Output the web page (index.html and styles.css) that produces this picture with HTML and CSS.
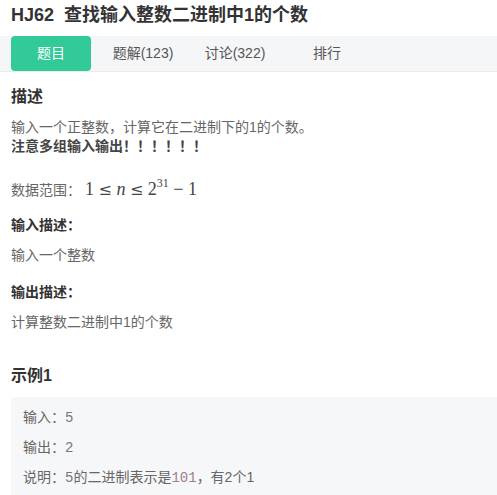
FILE: index.html
```html
<!DOCTYPE html>
<html lang="zh-CN">
<head>
  <meta charset="UTF-8">
  <title>HJ62 查找输入整数二进制中1的个数</title>
  <link rel="stylesheet" href="styles.css">
</head>
<body>
  <h1 class="title">HJ62&nbsp; 查找输入整数二进制中1的个数</h1>

  <div class="tabs">
    <a class="tab active">题目</a>
    <a class="tab">题解(123)</a>
    <a class="tab">讨论(322)</a>
    <a class="tab">排行</a>
  </div>

  <div class="content">
    <h2 class="section-title">描述</h2>
    <p class="text">输入一个正整数，计算它在二进制下的1的个数。</p>
    <p class="text strong">注意多组输入输出！！！！！！</p>
    <p class="text range">数据范围：<span class="math">1 <span class="rel">≤</span> <i>n</i> <span class="rel">≤</span> 2<sup>31</sup> − 1</span></p>

    <h3 class="sub-title first">输入描述：</h3>
    <p class="text">输入一个整数</p>

    <h3 class="sub-title">输出描述：</h3>
    <p class="text">计算整数二进制中1的个数</p>

    <h2 class="section-title example-title">示例1</h2>
    <div class="example">
      <p>输入：<code>5</code></p>
      <p>输出：<code>2</code></p>
      <p>说明：<code>5</code>的二进制表示是<code class="hl">101</code>，有2个1</p>
    </div>
  </div>
</body>
</html>
```

FILE: styles.css
```css
* {
  margin: 0;
  padding: 0;
  box-sizing: border-box;
}
body {
  font-family: 'Liberation Sans', 'Noto Sans CJK SC', sans-serif;
  color: #333;
  background: white;
  overflow: hidden;
}
.title {
  font-size: 18px;
  font-weight: bold;
  color: #333;
  padding: 4px 11px 0;
  height: 36px;
  line-height: 22px;
}
.tabs {
  display: flex;
  background: #f5f6f8;
  border-bottom: 1px solid #eaebee;
  padding-left: 11px;
  height: 36px;
}
.tab {
  width: 80px;
  height: 35px;
  line-height: 35px;
  text-align: center;
  font-size: 14px;
  color: #555;
  margin-right: 12px;
}
.tab.active {
  background: #32ca99;
  color: white;
  border-radius: 4px;
}
.content {
  padding: 0 11px;
}
.section-title {
  font-size: 16px;
  font-weight: bold;
  color: #333;
  margin-top: 14px;
  line-height: 22px;
}
.text {
  font-size: 14px;
  color: #666;
  line-height: 19px;
}
.section-title + .text {
  margin-top: 10px;
}
.strong {
  font-weight: bold;
  color: #444;
}
.range {
  margin-top: 16px;
  line-height: 22px;
}
.math {
  font-family: 'Liberation Serif', 'DejaVu Serif', serif;
  font-size: 18px;
  color: #444;
  margin-left: 4px;
}
.math .rel {
  font-family: 'DejaVu Serif', serif;
  font-size: 16px;
}
.math sup {
  font-size: 12px;
  vertical-align: 8px;
}
.sub-title {
  font-size: 14px;
  font-weight: bold;
  color: #333;
  margin-top: 18px;
  margin-bottom: 11px;
  line-height: 19px;
}
.sub-title.first {
  margin-top: 15px;
}
.example-title {
  margin-top: 33px;
}
.example {
  margin-top: 10px;
  margin-right: -11px;
  background: #f6f7f9;
  border-radius: 4px 0 0 0;
  padding: 11px 12px 4px;
}
.example p {
  font-size: 14px;
  color: #666;
  line-height: 19px;
  margin-bottom: 10px;
}
code {
  font-family: 'Liberation Mono', monospace;
  font-size: 14px;
  color: #777;
}
code.hl {
  color: #a07d8c;
}
```
